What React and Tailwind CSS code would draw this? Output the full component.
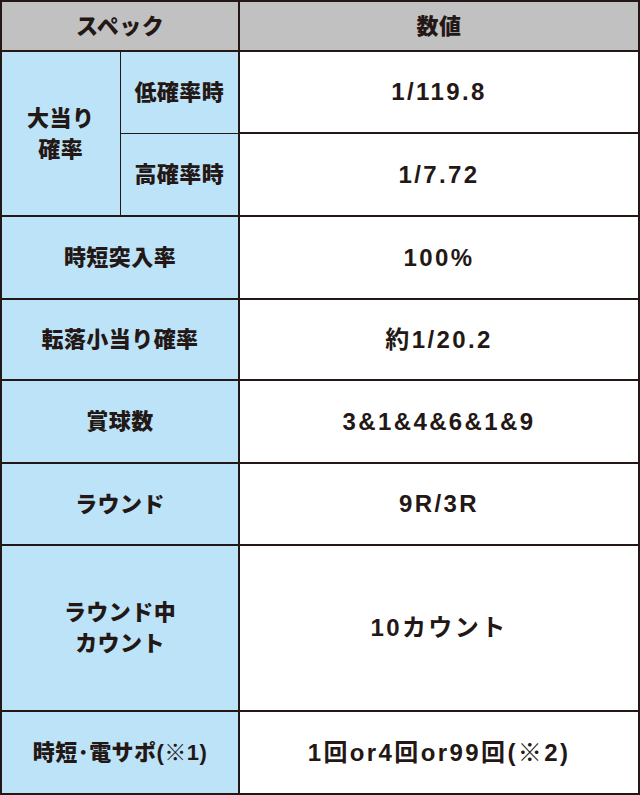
const rows = [
  { label: "時短突入率", value: "100%", h: "h-[83px]" },
  { label: "転落小当り確率", value: "約1/20.2", h: "h-[81px]" },
  { label: "賞球数", value: "3&1&4&6&1&9", h: "h-[83px]" },
  { label: "ラウンド", value: "9R/3R", h: "h-[82px]" },
  { label: "ラウンド中\nカウント", value: "10カウント", h: "h-[166px]" },
  { label: "時短･電サポ(※1)", value: "1回or4回or99回(※2)", h: "h-[83px]" },
];

const label = "bg-[#bde3f8] text-center align-middle text-[22px] leading-[31px] font-black tracking-[0.02em] whitespace-pre-line";
const value = "bg-white text-center align-middle text-[24px] font-bold tracking-[0.1em]";

export default function App() {
  return (
    <div
      className="w-[640px] h-[795px] overflow-hidden bg-white text-[#231815]"
      style={{ fontFamily: '"Liberation Sans", "Noto Sans CJK JP", sans-serif' }}
    >
      <table className="w-full border-collapse border-2 border-[#231815] table-fixed">
        <colgroup>
          <col className="w-[119px]" />
          <col className="w-[119px]" />
          <col />
        </colgroup>
        <tbody>
          <tr className="h-[50px]">
            <th colSpan={2} className="bg-[#c1c1c1] border-2 border-[#231815] text-[22px] font-black tracking-[0.02em]">
              スペック
            </th>
            <th className="bg-[#c1c1c1] border-2 border-[#231815] text-[22px] font-black tracking-[0.02em]">
              数値
            </th>
          </tr>
          <tr className="h-[82px]">
            <td rowSpan={2} className={`${label} border-2 border-[#231815] border-r border-r-[#231815]`}>
              {"大当り\n確率"}
            </td>
            <td className={`${label} border border-[#231815] border-r-2`}>低確率時</td>
            <td className={`${value} border-2 border-[#231815]`}>1/119.8</td>
          </tr>
          <tr className="h-[83px]">
            <td className={`${label} border border-[#231815] border-r-2 border-b-2`}>高確率時</td>
            <td className={`${value} border-2 border-[#231815]`}>1/7.72</td>
          </tr>
          {rows.map((r) => (
            <tr key={r.value} className={r.h}>
              <td colSpan={2} className={`${label} border-2 border-[#231815]`}>
                {r.label}
              </td>
              <td className={`${value} border-2 border-[#231815]`}>{r.value}</td>
            </tr>
          ))}
        </tbody>
      </table>
    </div>
  );
}
